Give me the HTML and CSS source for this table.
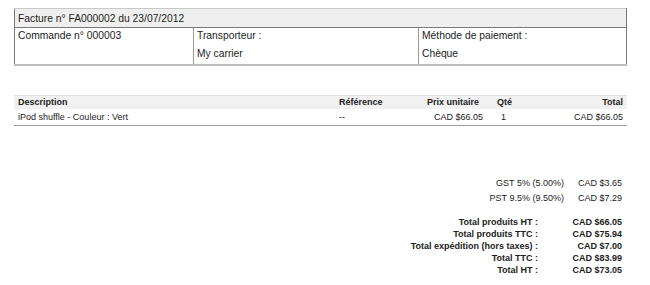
FILE: index.html
```html
<!DOCTYPE html>
<html>
<head>
<meta charset="utf-8">
<link rel="stylesheet" href="styles.css">
</head>
<body>
<table class="info">
  <tr class="info-head"><td colspan="3">Facture n° FA000002 du 23/07/2012</td></tr>
  <tr class="info-body">
    <td class="c1"><div class="line">Commande n° 000003</div></td>
    <td class="c2"><div class="line">Transporteur :</div><div class="line">My carrier</div></td>
    <td class="c3"><div class="line">Méthode de paiement :</div><div class="line">Chèque</div></td>
  </tr>
</table>

<table class="products">
  <thead>
    <tr>
      <th class="p-desc">Description</th>
      <th class="p-ref">Référence</th>
      <th class="p-price">Prix unitaire</th>
      <th class="p-qty">Qté</th>
      <th class="p-total">Total</th>
    </tr>
  </thead>
  <tbody>
    <tr>
      <td class="p-desc">iPod shuffle - Couleur : Vert</td>
      <td class="p-ref">--</td>
      <td class="p-price v">CAD $66.05</td>
      <td class="p-qty v">1</td>
      <td class="p-total">CAD $66.05</td>
    </tr>
  </tbody>
</table>

<table class="taxes">
  <tr><td class="t-label">GST 5% (5.00%)</td><td class="t-val">CAD $3.65</td></tr>
  <tr><td class="t-label">PST 9.5% (9.50%)</td><td class="t-val">CAD $7.29</td></tr>
</table>

<table class="totals">
  <tr><td class="s-label">Total produits HT :</td><td class="s-val">CAD $66.05</td></tr>
  <tr><td class="s-label">Total produits TTC :</td><td class="s-val">CAD $75.94</td></tr>
  <tr><td class="s-label">Total expédition (hors taxes) :</td><td class="s-val">CAD $7.00</td></tr>
  <tr><td class="s-label">Total TTC :</td><td class="s-val">CAD $83.99</td></tr>
  <tr><td class="s-label">Total HT :</td><td class="s-val">CAD $73.05</td></tr>
</table>
</body>
</html>
```

FILE: styles.css
```css
html, body {
  margin: 0;
  padding: 0;
  background: #fff;
}
body {
  padding: 8px 0 0 14px;
  font-family: "Liberation Sans", Arial, sans-serif;
  color: #222;
}
table {
  border-collapse: collapse;
  border-spacing: 0;
}
td, th {
  padding: 0;
  white-space: nowrap;
}

.info {
  width: 613px;
  font-size: 10.3px;
  border-top: 1px solid #c8c8c8;
  border-left: 1px solid #7a7a7a;
  border-right: 1px solid #7a7a7a;
  border-bottom: 2px solid #bdbdbd;
}
.info-head td {
  background: #efefef;
  height: 18px;
  padding: 0 0 0 3px;
  border-bottom: 1px solid #7a7a7a;
  vertical-align: middle;
}
.info-body td {
  vertical-align: top;
  padding: 0 0 0 3px;
  height: 35px;
}
.info-body .c1 { width: 175px; }
.info-body .c2 { width: 221px; border-left: 1px solid #9a9a9a; }
.info-body .c3 { border-left: 1px solid #9a9a9a; }
.line {
  height: 18px;
  line-height: 16px;
}

.products {
  width: 613px;
  margin-top: 29px;
  font-size: 9px;
  border-top: 1px solid #e2e2e2;
  border-bottom: 1px solid #9c9c9c;
}
.products th {
  background: #f1f1f1;
  font-weight: bold;
  height: 13px;
  line-height: 13px;
  text-align: left;
}
.products td {
  height: 16px;
  line-height: 14px;
  text-align: left;
  vertical-align: middle;
}
.products .p-desc { padding-left: 4px; width: 321px; }
.products .p-ref { width: 80px; }
.products .p-price { width: 60px; text-align: right; }
.products td.p-price { padding-right: 0; position: relative; left: 4px; }
.products .p-qty { padding-left: 18px; width: 32px; }
.products td.p-qty { padding-left: 22px; }
.products .p-total { text-align: right; padding-right: 4px; }

.taxes {
  margin: 50px 28px 0 auto;
  font-size: 9px;
}
.taxes td {
  height: 15px;
  line-height: 15px;
}
.taxes .t-label { text-align: right; }
.taxes .t-val { text-align: right; padding-left: 14px; }

.totals {
  margin: 10px 28px 0 auto;
  font-size: 9px;
  font-weight: bold;
}
.totals td {
  height: 12px;
  line-height: 12px;
}
.totals .s-label { text-align: right; padding-right: 30px; }
.totals .s-val { text-align: right; width: 54px; }
```
